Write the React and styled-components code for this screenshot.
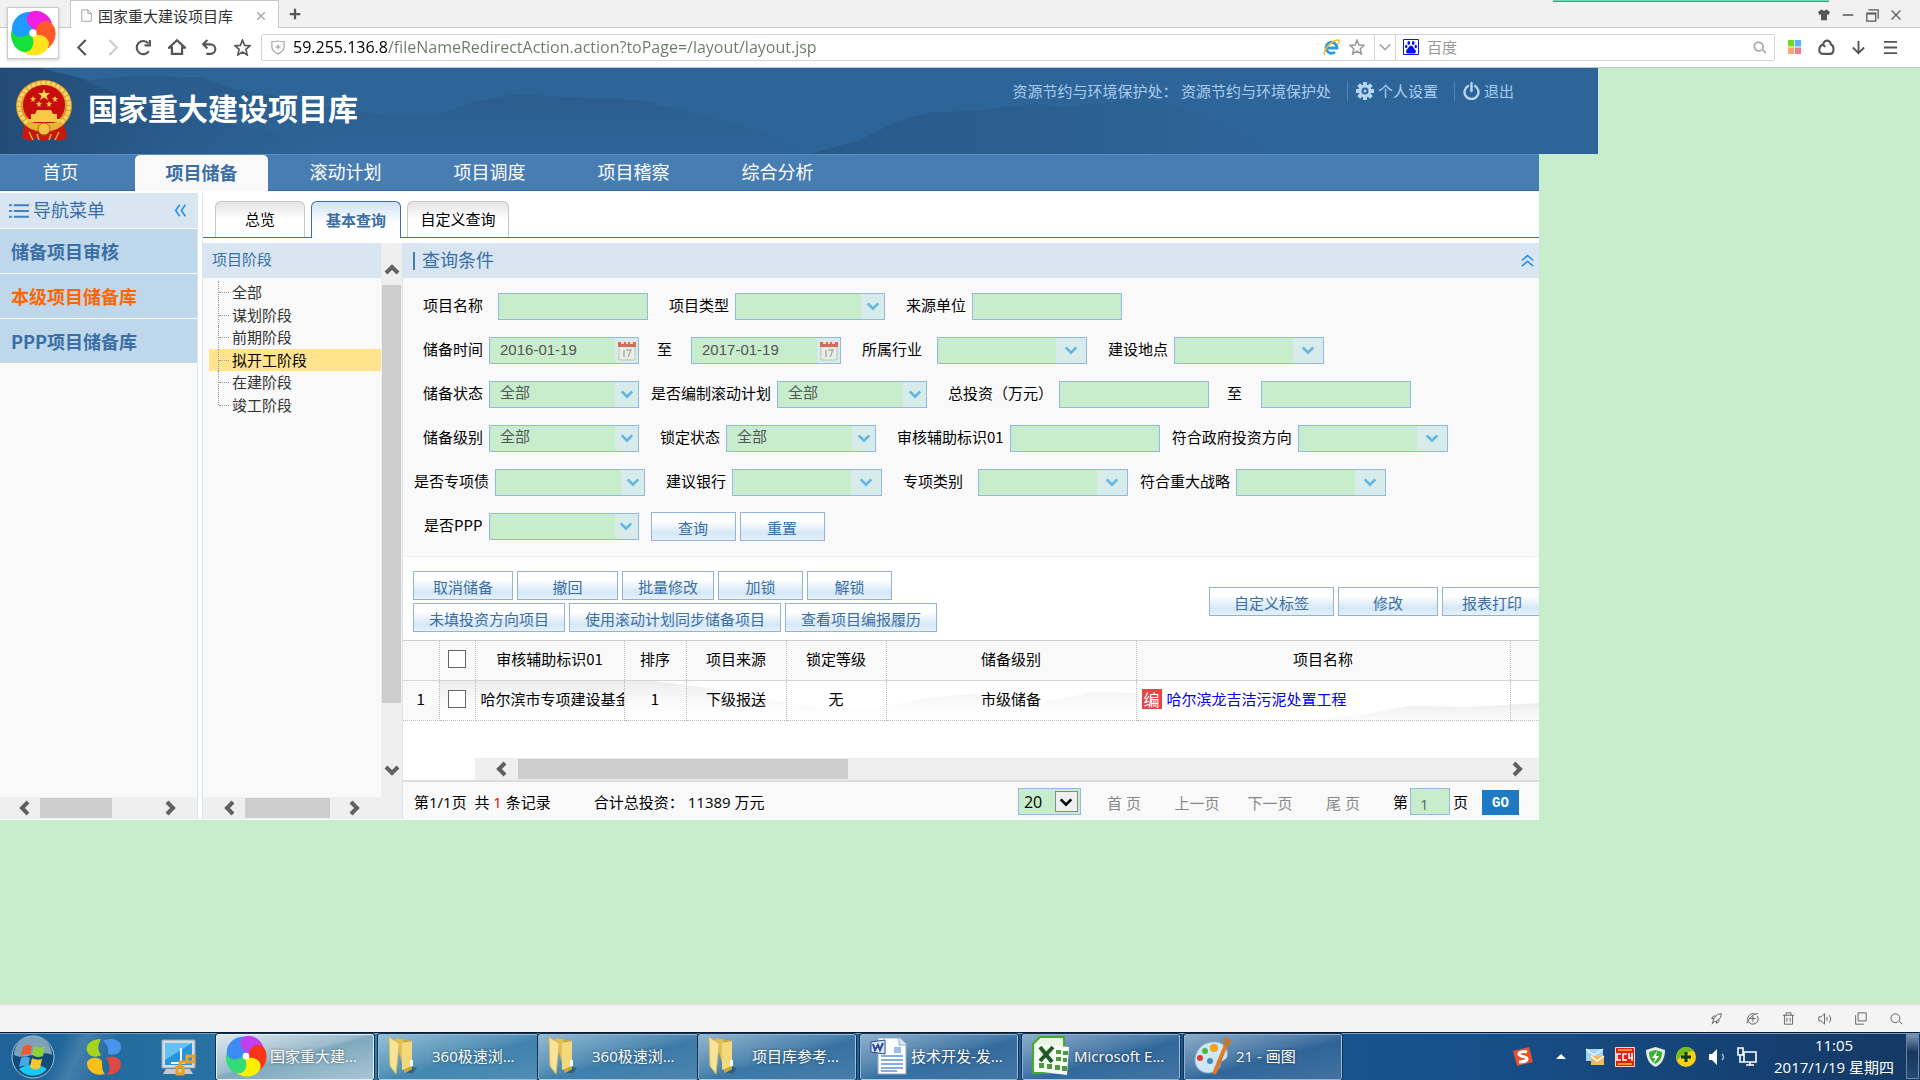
import React from "react";
import styled, { createGlobalStyle, css } from "styled-components";

const cjk = '"Noto Sans CJK SC", "Noto Sans", sans-serif';
const ui = '"Open Sans", "Noto Sans CJK SC", sans-serif';
const green = "#c7edcc";
const blue = "#3a6ea5";

const Global = createGlobalStyle`
  *, *::before, *::after { box-sizing: border-box; }
  body { margin: 0; font: 15px/20px ${cjk}; color: #000; background: ${green}; }
  button, input, select { font: inherit; color: inherit; margin: 0; padding: 0; border: 0; background: none; border-radius: 0; }
  button { cursor: pointer; }
  a { color: inherit; text-decoration: none; }
  ul { list-style: none; margin: 0; padding: 0; }
  svg { display: block; flex: none; }
  h1, h2 { margin: 0; font: inherit; }
`;

const Screen = styled.div`
  display: flex;
  flex-direction: column;
  min-height: 100vh;
  overflow: hidden;
`;

/* ---------- browser chrome ---------- */
const Chrome = styled.header`
  position: relative;
  background: #fff;
  border-bottom: 1px solid #c8c8c8;
`;
const TabStrip = styled.div`
  display: flex;
  height: 28px;
  padding-left: 70px;
  background: #f1f1f1;
  border-bottom: 1px solid #c8c8c8;
`;
const BrowserTab = styled.div`
  display: flex;
  align-items: center;
  width: 209px;
  height: 28px;
  padding: 2px 12px 0 9px;
  background: #fff;
  border: 1px solid #c8c8c8;
  border-bottom: 0;
  color: #333;
`;
const TabName = styled.span`
  flex: 1;
  margin-left: 4px;
  white-space: nowrap;
`;
const PlainButton = styled.button`
  display: flex;
  align-items: center;
  justify-content: center;
  width: ${(p) => p.$w || 32}px;
  height: ${(p) => p.$h || 28}px;
  color: ${(p) => p.$color || "#555"};
`;
const WindowControls = styled.div`
  display: flex;
  margin: 1px 12px 0 auto;
`;
const Strip = styled.div`
  position: absolute;
  top: 0;
  right: 91px;
  width: 276px;
  height: 2px;
  background: #6fd9b5;
  border-bottom: 1px solid #3e9c84;
`;
const BrowserLogo = styled.div`
  position: absolute;
  top: 7px;
  left: 7px;
  display: grid;
  place-items: center;
  width: 52px;
  height: 52px;
  background: #fff;
  border: 1px solid #ccc;
  box-shadow: 0 1px 3px rgba(0, 0, 0, 0.2);
`;
const ToolBar = styled.div`
  display: flex;
  align-items: center;
  height: 39px;
  padding: 0 14px 1px 67px;
`;
const AddressBox = styled.div`
  display: flex;
  flex: 1;
  align-items: center;
  height: 27px;
  margin: 0 3px 0 2px;
  border: 1px solid #d4d4d4;
  border-radius: 2px;
`;
const UrlInput = styled.input`
  flex: 1;
  min-width: 0;
  height: 25px;
  font-family: ${ui};
  font-size: 16px;
  background: linear-gradient(90deg, #000 95px, #6b7a68 95px);
  -webkit-background-clip: text;
  background-clip: text;
  -webkit-text-fill-color: transparent;
`;
const SearchBox = styled.div`
  display: flex;
  align-items: center;
  width: 379px;
  height: 25px;
  padding: 0 0 0 7px;
  border-left: 1px solid #d4d4d4;
`;
const SearchInput = styled.input`
  flex: 1;
  min-width: 0;
  margin-left: 8px;
  &::placeholder { color: #999; opacity: 1; }
`;
const Divided = styled.div`
  margin-left: 5px;
  border-left: 1px solid #d4d4d4;
`;

/* ---------- site header ---------- */
const Viewport = styled.main`
  flex: 1;
  background: ${green};
`;
const Banner = styled.div`
  position: relative;
  display: flex;
  width: calc(100% - 322px);
  height: 86px;
  padding: 0 84px 0 15px;
  background: #2e6599;
  color: #fff;
`;
const BannerArt = styled.svg`
  position: absolute;
  inset: 0;
  width: 100%;
  height: 100%;
`;
const Brand = styled.h1`
  position: relative;
  display: flex;
  align-items: center;
  gap: 15px;
  font: bold 30px/40px ${cjk};
`;
const BrandName = styled.span`
  padding-bottom: 8px;
`;
const Account = styled.div`
  position: relative;
  display: flex;
  align-items: center;
  height: 30px;
  margin: 8px 0 0 auto;
  color: #a9cdf0;
  white-space: pre;
`;
const AccountLink = styled.a`
  display: flex;
  align-items: center;
  gap: 4px;
  height: 20px;
  margin-left: 16px;
  padding-left: 8px;
  border-left: 1px solid #4f84b8;
`;
const MainNav = styled.nav`
  display: flex;
  width: calc(100% - 381px);
  height: 37px;
  background: #477db2;
  border-top: 1px solid #5a8fc4;
  border-bottom: 1px solid #2f6ba6;
`;
const NavLink = styled.a`
  width: ${(p) => (p.$first ? 121 : 133)}px;
  margin-right: ${(p) => (p.$first ? 14 : 11)}px;
  height: 36px;
  color: #fff;
  font-size: 18px;
  line-height: 32px;
  text-align: center;
  ${(p) => p.$active && css`
    background: #f9f9f9;
    color: ${blue};
    font-weight: bold;
    border-radius: 5px 5px 0 0;
    line-height: 34px;
  `}
`;

/* ---------- work area ---------- */
const Work = styled.div`
  display: flex;
  width: calc(100% - 381px);
  padding: 2px 0 1px;
  background: #fff;
`;
const SideMenu = styled.aside`
  display: flex;
  flex-direction: column;
  width: 198px;
  margin-right: 4px;
  background: #f9f9f9;
  border-right: 1px solid #d9e6f2;
`;
const SideHead = styled.div`
  display: flex;
  align-items: center;
  height: 36px;
  padding: 0 10px 0 9px;
  background: #d9e6f2;
  border-bottom: 1px solid #fff;
  color: ${blue};
  font-size: 18px;
`;
const SideTitle = styled.h2`
  flex: 1;
  margin-left: 4px;
  padding-bottom: 4px;
`;
const SideItem = styled.a`
  display: block;
  height: 45px;
  padding-left: 11px;
  background: #bfd7ea;
  border-bottom: 1px solid #fff;
  color: ${(p) => (p.$active ? "#ff6600" : blue)};
  font-weight: bold;
  font-size: 18px;
  line-height: 44px;
`;
const Content = styled.section`
  display: flex;
  flex: 1;
  flex-direction: column;
  min-width: 0;
  border-left: 1px solid #d9e6f2;
`;
const SubTabs = styled.div`
  display: flex;
  align-items: flex-end;
  gap: 6px;
  height: 45px;
  margin-bottom: 5px;
  padding-left: 12px;
  border-bottom: 1px solid ${blue};
`;
const SubTab = styled.button`
  width: ${(p) => p.$w || 90}px;
  height: 36px;
  padding-bottom: 1px;
  background: linear-gradient(#e4e4e4, #fff 50%);
  border: 1px solid #c6c6c6;
  border-bottom: 0;
  border-radius: 6px 6px 0 0;
  ${(p) => p.$active && css`
    height: 37px;
    margin-bottom: -1px;
    background: linear-gradient(#d0e2f4, #fff 60%);
    border-color: ${blue};
    color: ${blue};
    font-weight: bold;
  `}
`;
const Panels = styled.div`
  display: flex;
  flex: 1;
`;
const TreePanel = styled.div`
  display: flex;
  width: 200px;
  border-right: 1px solid #d9e6f2;
  background: #efefef;
`;
const TreeMain = styled.div`
  display: flex;
  flex: 1;
  flex-direction: column;
  background: #f9f9f9;
`;
const TreeTitle = styled.h2`
  height: 35px;
  padding-left: 9px;
  background: #d9e6f2;
  color: ${blue};
  line-height: 31px;
`;
const Tree = styled.ul`
  padding: 3px 0 0 6px;
`;
const TreeNode = styled.li`
  display: flex;
  align-items: center;
  position: relative;
  height: 22px;
  margin-bottom: ${(p) => (p.$odd ? 1 : 0)}px;
  padding-left: 10px;
  background: ${(p) => (p.$active ? "#ffe48d" : "none")};
  color: ${(p) => (p.$active ? "#000" : "#333")};
  line-height: 18px;
  &::before {
    content: "";
    width: 10px;
    margin-right: 3px;
    border-top: 1px dotted #999;
  }
  &::after {
    content: "";
    position: absolute;
    left: 9px;
    top: 0;
    height: ${(p) => (p.$last ? "50%" : "100%")};
    border-left: 1px dotted #999;
  }
`;
const HScroll = styled.div`
  display: flex;
  align-items: center;
  height: 22px;
  margin-top: auto;
  padding: 0 ${(p) => p.$pad[1]}px 0 ${(p) => p.$pad[0]}px;
  margin-left: ${(p) => p.$indent || 0}px;
  background: #efefef;
`;
const HThumb = styled.div`
  width: ${(p) => p.$w}px;
  height: 20px;
  margin: 0 auto 0 ${(p) => p.$lead}px;
  background: #cdcdcd;
`;
const VScroll = styled.div`
  display: flex;
  flex-direction: column;
  align-items: center;
  width: 21px;
  padding: 19px 0 41px;
  background: #efefef;
`;
const VThumb = styled.div`
  width: 19px;
  height: 418px;
  margin: 7px 0 auto;
  background: #cdcdcd;
`;
const Main = styled.div`
  display: flex;
  flex: 1;
  flex-direction: column;
  min-width: 0;
  overflow: hidden;
`;
const MainTitle = styled.div`
  display: flex;
  align-items: center;
  height: 35px;
  padding: 0 5px 0 10px;
  background: #d9e6f2;
  color: ${blue};
`;
const TitleText = styled.h2`
  flex: 1;
  height: 18px;
  padding-left: 7px;
  border-left: 2px solid #477db2;
  font-size: 18px;
  line-height: 14px;
`;

/* ---------- query form ---------- */
const Query = styled.form`
  padding: 6px 0 8px;
  background: #f9f9f9;
  border-bottom: 1px solid #eee;
`;
const Row = styled.div`
  display: flex;
  align-items: center;
  height: 44px;
  padding-left: ${(p) => p.$pad}px;
`;
const Field = styled.label`
  display: flex;
  align-items: center;
  gap: ${(p) => p.$gap}px;
  margin-left: ${(p) => p.$lead}px;
  white-space: nowrap;
`;
const FieldName = styled.span`
  padding-bottom: 3px;
`;
const Box = styled.span`
  position: relative;
  display: flex;
  width: 150px;
  height: 27px;
  background: ${green};
  border: 1px solid #94b8e4;
`;
const BoxInput = styled.input`
  flex: 1;
  min-width: 0;
  padding-left: 10px;
  color: #555;
  font-family: "Liberation Sans", ${cjk};
`;
const BoxSelect = styled.select`
  width: 100%;
  padding: 0 0 4px 10px;
  appearance: none;
  color: #555;
`;
const BoxEnd = styled.span`
  display: grid;
  place-items: center;
  width: ${(p) => (p.$wide ? 30 : 23)}px;
  background: #d7ecea;
  color: #62b6e0;
  pointer-events: none;
  ${(p) => p.$over && css`
    position: absolute;
    top: 0;
    right: 0;
    bottom: 0;
  `}
`;
const Button = styled.button`
  flex: none;
  width: ${(p) => p.$w}px;
  height: 29px;
  padding-top: 3px;
  background: linear-gradient(#fff 30%, #d5e7f6 75%, #e6f1fa);
  border: 1px solid #90b4d8;
  color: ${blue};
  line-height: 22px;
  white-space: nowrap;
`;
const Tools = styled.div`
  display: flex;
  align-items: center;
  justify-content: space-between;
  height: 83px;
  padding: 12px 0 6px 10px;
`;
const ToolLines = styled.div`
  display: flex;
  flex-direction: column;
  gap: 3px;
`;
const ToolLine = styled.div`
  display: flex;
  gap: 4px;
`;
const ToolRight = styled(ToolLine)`
  margin-right: -3px;
`;
const QueryButtons = styled(ToolLine)`
  margin-left: 12px;
`;

/* ---------- result grid ---------- */
const GridArea = styled.div`
  position: relative;
  height: 118px;
  border-top: 1px solid #ccc;
`;
const GridArt = styled.svg`
  position: absolute;
  top: 40px;
  left: 36px;
  width: calc(100% - 36px);
  height: 60px;
`;
const Grid = styled.table`
  position: relative;
  width: 100%;
  table-layout: fixed;
  border-collapse: collapse;
  th, td {
    height: 40px;
    padding: 0 0 2px;
    border-right: 1px dotted #bbb;
    border-bottom: 1px dotted #bbb;
    font-weight: normal;
    text-align: center;
    white-space: nowrap;
    overflow: hidden;
  }
  th { background: #f9f9f9; }
  thead th { height: 39px; border-bottom: 1px solid #d6d6d6; }
  th:last-child, td:last-child { border-right: 0; }
`;
const Cut = styled.td`
  && { padding-left: 5px; text-align: left; text-overflow: clip; }
`;
const Check = styled.input`
  display: block;
  width: 18px;
  height: 18px;
  margin: 0 auto;
  appearance: none;
  background: #fff;
  border: 1px solid #666;
`;
const Project = styled.a`
  display: flex;
  align-items: center;
  gap: 5px;
  padding-left: 5px;
  color: #0000ee;
`;
const Badge = styled.span`
  width: 20px;
  height: 20px;
  background: #e64545;
  color: #fff;
  font-size: 16px;
  line-height: 20px;
  text-align: center;
`;
const Pager = styled.div`
  display: flex;
  align-items: center;
  height: 39px;
  padding: 2px 20px 0 11px;
  background: #f9f9f9;
  border-top: 2px solid #dcdcdc;
  font-family: ${ui};
  white-space: pre;
`;
const Count = styled.span`
  color: red;
`;
const Total = styled.span`
  flex: 1;
  margin-left: 43px;
`;
const PageSize = styled.span`
  position: relative;
  display: flex;
  width: 63px;
  height: 27px;
  margin-right: 20px;
  background: ${green};
  border: 1px solid #94b8e4;
`;
const PageSizeSelect = styled.select`
  width: 100%;
  padding-left: 5px;
  appearance: none;
  font-size: 16px;
`;
const PageSizeArrow = styled.span`
  position: absolute;
  top: 2px;
  right: 2px;
  display: grid;
  place-items: center;
  width: 23px;
  height: 21px;
  background: #efefef;
  border: 1px solid #888;
  pointer-events: none;
`;
const PageLink = styled.button`
  width: 46px;
  margin-right: 27px;
  padding-top: 3px;
  color: #888;
  white-space: nowrap;
`;
const PageNumber = styled.input`
  width: 40px;
  height: 27px;
  margin: 0 3px 0 2px;
  padding: 4px 0 0 9px;
  background: ${green};
  border: 1px solid #94b8e4;
  color: #666;
`;
const Go = styled.button`
  width: 37px;
  height: 25px;
  margin: 2px 0 0 14px;
  background: #1f7ac4;
  color: #fff;
  font: bold 14px/20px "Liberation Mono", monospace;
`;

/* ---------- browser status bar and task bar ---------- */
const StatusBar = styled.footer`
  display: flex;
  align-items: center;
  justify-content: flex-end;
  height: 28px;
  padding-right: 6px;
  background: #f4f4f4;
  border-top: 1px solid #e0e0e0;
`;
const TaskBar = styled.footer`
  display: flex;
  align-items: center;
  height: 48px;
  padding-right: 1px;
  background: linear-gradient(115deg, transparent 60px, rgba(255,255,255,.15) 80px, transparent 110px),
    linear-gradient(90deg, #1f6398, #2f7daa 20%, #1d5c94 50%, #17518c 75%, #143864);
  border-top: 1px solid #0d1c30;
  box-shadow: inset 0 1px #6f9fc4;
  color: #fff;
`;
const Launcher = styled.button`
  display: grid;
  place-items: center;
  width: ${(p) => p.$w}px;
  height: 47px;
`;
const TaskButton = styled.button`
  display: flex;
  align-items: center;
  width: ${(p) => (p.$stacked ? 160 : 158)}px;
  height: 46px;
  margin-right: ${(p) => (p.$stacked ? 0 : 4)}px;
  padding-left: 8px;
  padding-bottom: 2px;
  gap: ${(p) => (p.$folder ? 5 : 3)}px;
  background: ${(p) => p.$active
    ? "linear-gradient(165deg, #dfe9ee, #9dbccd 45%, #7fa9bf 50%, #a9c6d6)"
    : "linear-gradient(165deg, rgba(255,255,255,.5), rgba(255,255,255,.2) 45%, rgba(255,255,255,.1) 55%, rgba(255,255,255,.18))"};
  border: 1px solid ${(p) => (p.$active ? "#e8f0f4" : "rgba(200,225,240,.6)")};
  border-radius: 2px;
  outline: 1px solid #12304f;
  font-family: ${ui};
  text-shadow: 0 0 3px rgba(0, 0, 0, 0.5);
  white-space: nowrap;
`;
const Tray = styled.div`
  display: flex;
  align-items: center;
  margin-left: auto;
`;
const Clock = styled.div`
  width: 144px;
  padding-bottom: 1px;
  font: 15px/22px ${ui};
  text-align: center;
  white-space: nowrap;
`;
const ShowDesktop = styled.button`
  width: 13px;
  height: 45px;
  background: linear-gradient(#7d97b3, #18365c 40%, #234a74);
  border: 1px solid #6c88a6;
`;

/* ---------- drawings ---------- */
const Line = ({ d, w = 16, h = w, box = "0 0 16 16", sw = 2, fill = "none", ...rest }) => (
  <svg width={w} height={h} viewBox={box} fill={fill} stroke="currentColor" strokeWidth={sw} {...rest}>
    <path d={d} />
  </svg>
);
const Chevron = ({ dir = "down", w = 14, sw = 3 }) => {
  const turn = { down: 0, left: 90, up: 180, right: 270 }[dir];
  return (
    <svg width={w} height={w} viewBox="0 0 16 16" fill="none" stroke="currentColor" strokeWidth={sw}>
      <path d="M2 5l6 6 6-6" transform={`rotate(${turn} 8 8)`} />
    </svg>
  );
};
const ScrollArrow = styled.button`
  display: grid;
  place-items: center;
  width: 16px;
  height: 16px;
  color: #606060;
`;
const petal = "M0 -3C-8 -5 -12 -12 -8 -17C-3 -23 9 -22 15 -13C9 -15 4 -11 3 -3Z";
const Pinwheel = ({ size = 46, colors = ["#f01ee0", "#ff5a28", "#ffe41e", "#14e03c", "#1e9bff"] }) => (
  <svg width={size} height={size} viewBox="-22 -22 44 44">
    {colors.map((c, i) => (
      <path key={c} fill={c} d={petal} transform={`rotate(${12 + i * 72})`} stroke={c} strokeWidth="1.500" strokeLinejoin="round" />
    ))}
    <circle r="3.500" fill="#fff" />
  </svg>
);
const starPath = "M8 1l2 5 5 .4-3.8 3.3L12.400 15 8 12.200 3.600 15l1.200-5.300L1 6.400 6 6z";
const Emblem = () => (
  <svg width="58" height="64" viewBox="0 0 58 62">
    <path d="M9 44l-2 14 8 3 6-3 8 3 8-3 7 3 8-3-3-14z" fill="#c8190f" />
    <ellipse cx="29" cy="26" rx="28" ry="26" fill="#d99a24" />
    <ellipse cx="29" cy="26" rx="25" ry="23" fill="none" stroke="#f7d468" strokeWidth="4" strokeDasharray="4 1" />
    <ellipse cx="29" cy="25" rx="21" ry="20" fill="#c80d0d" />
    <path d="M29 9l1.500 4h4.500l-3.500 3 1.500 4-4-2.500-4 2.500 1.500-4-3.500-3h4.500z" fill="#ffd94a" />
    <g fill="#f7c945">
      <path d="M18 16l1 2h2l-2 2 1 2-2-1-2 1 1-2-2-2h2zM40 16l1 2h2l-2 2 1 2-2-1-2 1 1-2-2-2h2zM24 21l1 2h2l-2 2 1 2-2-1-2 1 1-2-2-2h2zM34 21l1 2h2l-2 2 1 2-2-1-2 1 1-2-2-2h2z" />
      <path d="M22 30h14l2 4h4v5h4v3H12v-3h4v-5h4z" />
      <path d="M11 43h36l-5 6H16z" fill="#e9b238" />
    </g>
    <circle cx="29" cy="49" r="6" fill="#f2c14a" stroke="#b5650f" />
    <path d="M14 52l4 8M44 52l-4 8M22 54l2 6M36 54l-2 6" stroke="#f0a830" strokeWidth="1.500" />
  </svg>
);
const Gear = () => (
  <svg width="18" height="18" viewBox="-9 -9 18 18" fill="#b8d6f2">
    {[0, 45, 90, 135].map((a) => <rect key={a} x="-2" y="-9" width="4" height="18" transform={`rotate(${a})`} />)}
    <circle r="6.500" />
    <circle r="3.500" fill="#2e6599" />
    <circle r="1.500" />
  </svg>
);
const Power = () => (
  <svg width="17" height="18" viewBox="0 0 17 18" fill="none" stroke="#b8d6f2" strokeWidth="2.400" strokeLinecap="round">
    <path d="M5 4a7 7 0 1 0 7 0M8.500 1v8" />
  </svg>
);
const Calendar = () => (
  <svg width="18" height="21" viewBox="0 0 18 21">
    <path d="M1 3h16v17H1z" fill="#e9efe6" stroke="#b9c4b9" />
    <path d="M0 2h18v5H0z" fill="#d9695f" />
    <path d="M3 0h3v4H3zM8 0h2v4H8zM12 0h3v4h-3z" fill="#e8e0dc" />
    <path d="M6 10v7M8 10h5l-3 7" stroke="#a9b0a9" strokeWidth="1.500" fill="none" />
  </svg>
);
const Ie = () => (
  <svg width="17" height="17" viewBox="0 0 17 17" fill="none">
    <path d="M4 9h10a5.500 5.500 0 1 0-2 4" stroke="#2e9be0" strokeWidth="2.800" />
    <path d="M2 16C-1 12 9 1 15 1c2 0 1 3 0 4" stroke="#f2bd22" strokeWidth="1.600" />
  </svg>
);
const Paw = () => (
  <svg width="16" height="16" viewBox="0 0 16 16" fill="#0a14f0">
    <path d="M.5.5h15v15H.5z" fill="#fff" stroke="#0a14f0" />
    <ellipse cx="5.800" cy="4" rx="1.400" ry="2" /><ellipse cx="10.200" cy="4" rx="1.400" ry="2" />
    <ellipse cx="3.200" cy="7.500" rx="1.200" ry="1.700" /><ellipse cx="12.800" cy="7.500" rx="1.200" ry="1.700" />
    <path d="M8 6.500c2 0 2.500 2.500 4 4s1 4-1 4H5c-2 0-2.500-2.500-1-4s2-4 4-4z" />
  </svg>
);
const Folder = () => (
  <svg width="40" height="40" viewBox="0 0 40 40">
    <path d="M22 30l8 2-4 5h-8z" fill="#12405f" opacity=".5" />
    <path d="M8 2l17 3v28l-7 4z" fill="#e2bf55" />
    <path d="M16 4l9 1v28l-7 3z" fill="#c9a23c" />
    <path d="M2 1l8 5c2 1 2 2 2 4l-3 28L3 30z" fill="#f7e49a" stroke="#d8b955" />
    <path d="M15 7l10-2v25l-10 4z" fill="#f3d97c" />
    <path d="M23 24h3v6h-3z" fill="#fff" />
  </svg>
);
const Word = () => (
  <svg width="39" height="40" viewBox="0 0 39 40">
    <path d="M9 2h22l6 6v30H9z" fill="#fbfdff" stroke="#8fa9cc" />
    <path d="M30 1v8h8" fill="#d9e5f4" stroke="#8fa9cc" />
    <path d="M12 20h22M12 24h22M12 28h22M12 32h22M12 35h16" stroke="#5f93d4" strokeWidth="1.500" />
    <path d="M2 6l14-2v14L2 16z" fill="#dfe8f6" stroke="#27489c" />
    <path d="M4 8l2 6 3-5 2 5 3-7" stroke="#27489c" strokeWidth="2" fill="none" />
    <path d="M25 11h7v6h-7z" fill="#9dbde6" />
  </svg>
);
const Excel = () => (
  <svg width="40" height="40" viewBox="0 0 40 40">
    <path d="M2 37V8l7-7h24v36z" fill="#e9f5e2" stroke="#4aa827" strokeWidth="2" />
    <path d="M5 8l33 3-2 28-32-4z" fill="#f8fcf6" />
    <path d="M25 14h5v4h-5zM32 15h5v4h-5zM25 21h5v4h-5zM32 22h4v4h-4zM8 27h5v5H8zM16 28h5v5h-5zM24 29h5v5h-5zM31 30h5v5h-5z" fill="#4c9a3d" />
    <path d="M9 11l12 15M22 11L9 25" stroke="#1c5c22" strokeWidth="4" />
  </svg>
);
const Paint = () => (
  <svg width="40" height="40" viewBox="0 0 40 40">
    <path d="M19 6c10-1 17 5 15 15-2 4-7 3-7 8 0 6-10 10-17 7C2 33 0 24 4 16 7 10 12 7 19 6z" fill="#cfe6f5" stroke="#88b5d4" />
    <circle cx="7" cy="22" r="3" fill="#e23f34" /><circle cx="12" cy="15" r="3" fill="#4cb83c" /><circle cx="21" cy="12" r="4" fill="#f5a11c" />
    <circle cx="17" cy="25" r="3" fill="#4389c4" />
    <path d="M21 38L33 9" stroke="#e07824" strokeWidth="4" />
    <path d="M30 8l1-7 8 3-4 7z" fill="#b77b42" />
  </svg>
);
const Orb = () => (
  <svg width="44" height="44" viewBox="0 0 44 44">
    <circle cx="22" cy="22" r="21" fill="#124a78" stroke="#9fc6e0" />
    <path d="M3 20A19 19 0 0 1 41 20C30 14 14 26 3 20z" fill="#9bb7c9" opacity=".8" />
    <path d="M8 34a18 18 0 0 0 28 0c-8-6-20-6-28 0z" fill="#19c8f0" />
    <path d="M12 12c4-3 7-2 9-1l-2 9c-3-2-6-1-9 1z" fill="#f0592c" />
    <path d="M23 11c4 2 8 2 11 0l-2 10c-4 2-7 1-11-1z" fill="#8fce3c" />
    <path d="M10 23c3-2 6-2 9 0l-2 9c-4-2-6-1-9 0z" fill="#4aa8ea" />
    <path d="M21 23c3 2 7 2 10 1l-2 9c-4 2-7 2-10-1z" fill="#fbc72c" />
  </svg>
);
const Petals = () => (
  <svg width="38" height="38" viewBox="0 0 38 38">
    <path d="M16 1C6 1 0 7 2 13c2 6 9 7 14 4-4-5-3-11 0-16z" fill="#a8d41c" />
    <path d="M18 3c7-4 18-2 18 6 0 7-7 9-13 7 1-6-1-10-5-13z" fill="#4a94ee" />
    <path d="M2 24c3-5 11-6 15-1 0 5 0 10 3 13C11 39 1 33 2 24z" fill="#f7bf18" />
    <path d="M21 20c6-3 15-1 15 6 0 7-6 11-14 11 4-6 3-12-1-17z" fill="#de4a42" />
  </svg>
);
const Snip = () => (
  <svg width="36" height="38" viewBox="0 0 36 38">
    <path d="M1 2h33v28H1z" fill="#d5dde2" stroke="#98a5ad" />
    <path d="M4 5h27v22H4z" fill="#2794dc" />
    <path d="M4 5h27L4 22z" fill="#64c2f2" />
    <path d="M5 31h24l3 5H2z" fill="#c4ccd1" />
    <path d="M20 10v15M10 25h14" stroke="#fff" strokeWidth="2" />
    <path d="M26 18h7v6h-7zM16 29h6v7h-6zM19 28v-4h7" stroke="#eba024" strokeWidth="3" fill="none" />
  </svg>
);

const statusIcons = [
  ["加速", "M3 13l2-5 4-5 5-1-1 5-5 4zM5 8H2l2-3h3M8 11v3l3-2V9M2 15l3-3"],
  ["兼容模式", "M14 5a6.500 6.500 0 1 1-2-2M1 14C4 6 10 2 15 2M5 8h7M8.500 5v7"],
  ["清理", "M1 4h14M3 4v11h10V4M5 4V1h6v3M6 7v5M10 7v5"],
  ["静音", "M1 6v5h3l4 4V2L4 6zM11 6v5M14 4c2 3 2 6 0 9"],
  ["多窗口", "M5 1h10v10H5zM2 4v11h10"],
  ["缩放", "M11 11a5.500 5.500 0 1 0-1 1M11 11l4 4"],
];
const trayIcons = [
  ["搜狗输入法", 38, <svg width="20" height="20" viewBox="0 0 20 20"><path d="M0 4l16-4 4 15-16 4z" fill="#e8502c" /><path d="M14 5c-4-1-8 0-8 2 0 3 8 2 8 5 0 2-4 3-8 3" fill="none" stroke="#fff" strokeWidth="3" /></svg>],
  ["显示隐藏的图标", 38, <svg width="10" height="5" viewBox="0 0 10 5"><path d="M0 5l5-5 5 5z" fill="#fff" /></svg>],
  ["邮件", 30, <svg width="18" height="18" viewBox="0 0 18 18"><path d="M0 1h17v12H0z" fill="#a5d1f2" /><path d="M0 1l8 6 9-6" fill="none" stroke="#e8f4fc" strokeWidth="1.500" /><path d="M5 8h13v9H5z" fill="#f0b95c" /><path d="M5 8l6 5 7-5" fill="none" stroke="#fff" strokeWidth="1.500" /></svg>],
  ["网银", 30, <svg width="20" height="20" viewBox="0 0 20 20"><path d="M.5.500h19v19H.5z" fill="#e3200f" stroke="#ffd7c0" /><path d="M6 7H2v6h4M12 7H8v6h4M14 6v5h4M17 6v8" stroke="#fff" strokeWidth="1.500" fill="none" /><path d="M3 3h14M3 17h14" stroke="#ff9b24" strokeWidth="2" /></svg>],
  ["安全防护", 30, <svg width="19" height="20" viewBox="0 0 19 20"><path d="M9.500 0L19 3c0 8-3 14-9.500 17C3 17 0 11 0 3z" fill="#e4ece4" /><path d="M9.500 3L16 5c0 6-2 9-6.500 12C5 14 3 11 3 5z" fill="#3cae34" /><path d="M11 4l-5 7h3l-1 5 5-7h-3z" fill="#fff" /></svg>],
  ["安全卫士", 31, <svg width="20" height="20" viewBox="0 0 20 20"><circle cx="10" cy="10" r="10" fill="#f5cf18" /><path d="M10 0a10 10 0 0 1 8 4c-6 0-12 4-17 9A10 10 0 0 1 10 0z" fill="#74bc1c" /><path d="M10 5v10M5 10h10" stroke="#063c14" strokeWidth="3" /></svg>],
  ["音量", 31, <svg width="18" height="18" viewBox="0 0 18 18"><path d="M1 6v6h3l5 5V1L4 6z" fill="#fff" /><path d="M14 6c2 2 2 4 0 6" stroke="#9db8d4" fill="none" strokeWidth="1.500" /></svg>],
  ["网络", 30, <svg width="20" height="20" viewBox="0 0 20 20" fill="none" stroke="#fff" strokeWidth="1.600"><path d="M7 5h12v10H7zM9 18h8M13 15v3M1 1h5v7H1zM3 8v7h4" /></svg>],
];

/* ---------- data ---------- */
const rows = [
  [20, ["项目名称", "text", 0, 15], ["项目类型", "select", 21, 6], ["来源单位", "text", 21, 6]],
  [20, ["储备时间", "date", 0, 6, "2016-01-19"], ["至", "date", 18, 19, "2017-01-19"], ["所属行业", "wide", 21, 15], ["建设地点", "wide", 21, 6]],
  [20, ["储备状态", "select", 0, 6, "全部"], ["是否编制滚动计划", "select", 12, 6, "全部"], ["总投资（万元）", "text", 21, 6], ["至", "text", 18, 19]],
  [20, ["储备级别", "select", 0, 6, "全部"], ["锁定状态", "select", 21, 6, "全部"], ["审核辅助标识01", "text", 21, 6], ["符合政府投资方向", "wide", 12, 6]],
  [11, ["是否专项债", "select", 0, 6], ["建议银行", "wide", 21, 6], ["专项类别", "wide", 21, 15], ["符合重大战略", "wide", 12, 6]],
  [21, ["是否PPP", "select", 0, 6]],
];
const leftTools = [
  [["取消储备", 100], ["撤回", 101], ["批量修改", 92], ["加锁", 85], ["解锁", 85]],
  [["未填投资方向项目", 152], ["使用滚动计划同步储备项目", 212], ["查看项目编报履历", 152]],
];
const rightTools = [["自定义标签", 125], ["修改", 100], ["报表打印", 100]];
const columns = [36, 36, 149, 62, 100, 100, 250, 374, undefined];

function Control({ kind, value = "" }) {
  if (kind === "text") return <Box><BoxInput type="text" defaultValue={value} /></Box>;
  if (kind === "date")
    return (
      <Box>
        <BoxInput type="text" defaultValue={value} />
        <BoxEnd><Calendar /></BoxEnd>
      </Box>
    );
  return (
    <Box>
      <BoxSelect defaultValue={value}><option value={value}>{value}</option></BoxSelect>
      <BoxEnd $over $wide={kind === "wide"}><Chevron sw={3} /></BoxEnd>
    </Box>
  );
}

function Scroller({ pad, lead, thumb, indent }) {
  return (
    <HScroll $pad={pad} $indent={indent}>
      <ScrollArrow aria-label="向左滚动"><Chevron dir="left" w={16} sw={4} /></ScrollArrow>
      <HThumb $lead={lead} $w={thumb} />
      <ScrollArrow aria-label="向右滚动"><Chevron dir="right" w={16} sw={4} /></ScrollArrow>
    </HScroll>
  );
}

function Browser() {
  return (
    <Chrome>
      <TabStrip>
        <BrowserTab>
          <Line d="M1 1h7l4 4v9H1zM8 1v4h4" w={14} sw={1} box="0 0 14 16" color="#999" />
          <TabName>国家重大建设项目库</TabName>
          <PlainButton $w={10} $h={16} aria-label="关闭标签" $color="#aaa"><Line d="M3 3l10 10M13 3L3 13" w={12} /></PlainButton>
        </BrowserTab>
        <PlainButton aria-label="新标签"><Line d="M8 1v14M1 8h14" w={12} sw={3} /></PlainButton>
        <WindowControls>
          <PlainButton $w={24} aria-label="皮肤"><Line d="M4 1h2l2 2 2-2h2l4 3-2 4-2-1v8H4V7L2 8 0 4z" w={12} sw={0} style={{ fill: "#555" }} /></PlainButton>
          <PlainButton $w={24} aria-label="最小化"><Line d="M1 8h14" w={12} /></PlainButton>
          <PlainButton $w={24} aria-label="还原"><Line d="M1 5h11v10H1zM3 1h12v11M1 6h11" w={13} sw={1.500} /></PlainButton>
          <PlainButton $w={24} aria-label="关闭"><Line d="M2 2l12 12M14 2L2 14" w={12} sw={1.500} /></PlainButton>
        </WindowControls>
      </TabStrip>
      <Strip />
      <ToolBar>
        <PlainButton $w={30} aria-label="后退"><Line d="M11 1L4 8l7 7" w={17} /></PlainButton>
        <PlainButton $w={30} $color="#ccc" aria-label="前进"><Line d="M5 1l7 7-7 7" w={17} /></PlainButton>
        <PlainButton $w={33} aria-label="刷新"><Line d="M13 11.500A6.200 6.200 0 1 1 12.500 4M14 1v5H9" w={17} /></PlainButton>
        <PlainButton $w={33} aria-label="主页"><Line d="M1 8.500L8 2l7 6.500H12.500V14h-9V8.500z" w={18} /></PlainButton>
        <PlainButton $w={33} aria-label="恢复"><Line d="M6 1L2 5l4 4M2 5h7a4.500 4.500 0 0 1 0 9H5" w={17} /></PlainButton>
        <PlainButton $w={33} aria-label="收藏"><Line d={starPath} w={17} sw={1.500} /></PlainButton>
        <AddressBox>
          <PlainButton $w={31} $color="#999" aria-label="网站信息"><Line d="M1 2c3 0 4 0 7-1 3 1 4 1 7 1v6c0 4-3 6-7 8-4-2-7-4-7-8zM8 5v6M5 8h6" w={14} h={16} sw={1.200} /></PlainButton>
          <UrlInput aria-label="地址" defaultValue="59.255.136.8/fileNameRedirectAction.action?toPage=/layout/layout.jsp" />
          <PlainButton $w={25} aria-label="兼容模式"><Ie /></PlainButton>
          <PlainButton $w={25} $color="#999" aria-label="加入收藏"><Line d={starPath} w={16} sw={1.500} /></PlainButton>
          <Divided><PlainButton $w={20} $h={25} $color="#aaa" aria-label="历史"><Chevron w={14} sw={2} /></PlainButton></Divided>
          <SearchBox>
            <Paw />
            <SearchInput aria-label="搜索" placeholder="百度" />
            <PlainButton $w={28} $color="#aaa" aria-label="搜索"><Line d="M10.500 10.500a5 5 0 1 0-1 1M10.500 10.500l4 4.500" w={14} /></PlainButton>
          </SearchBox>
        </AddressBox>
        <PlainButton aria-label="应用">
          <svg width="13" height="14" viewBox="0 0 13 14"><path d="M0 0h6v6.500H0z" fill="#6cdb1c" /><path d="M7 0h6v6.500H7z" fill="#55b4ff" /><path d="M0 7.500h6V14H0z" fill="#ffa36c" /><path d="M7 7.500h6V14H7z" fill="#f27d88" /></svg>
        </PlainButton>
        <PlainButton aria-label="云"><Line d="M5 5a3.500 3.500 0 0 1 7 0c4 2 3 9-.5 9h-7C0 14 0 7 5 5c0 1 1 2 2 2" w={17} /></PlainButton>
        <PlainButton aria-label="下载"><Line d="M8 1v13M2 8l6 6 6-6" w={15} /></PlainButton>
        <PlainButton aria-label="菜单"><Line d="M1 2h14M1 8h14M1 14h14" w={15} /></PlainButton>
      </ToolBar>
      <BrowserLogo><Pinwheel /></BrowserLogo>
    </Chrome>
  );
}

function Results() {
  return (
    <GridArea>
      <GridArt viewBox="0 0 1100 60" preserveAspectRatio="none">
        <defs>
          <linearGradient id="mist" x1="0" y1="0" x2="0" y2="1">
            <stop offset="0" stopColor="#ececec" /><stop offset="1" stopColor="#fff" stopOpacity="0" />
          </linearGradient>
        </defs>
        <path d="M0 0h215l40 5 50 8 60 12 70 4 50-12 50-4 60 10 60-12 40 1 60 12 100 20H0z" fill="url(#mist)" />
        <path d="M810 46l60-8 50-4 50-9 60 1 70-4v30z" fill="url(#mist)" />
      </GridArt>
      <Grid>
        <colgroup>{columns.map((w, i) => <col key={i} style={{ width: w }} />)}</colgroup>
        <thead>
          <tr>
            <th />
            <th><Check type="checkbox" aria-label="全选" /></th>
            {["审核辅助标识01", "排序", "项目来源", "锁定等级", "储备级别", "项目名称"].map((t) => <th key={t}>{t}</th>)}
            <th />
          </tr>
        </thead>
        <tbody>
          <tr>
            <th>1</th>
            <td><Check type="checkbox" aria-label="选择第1行" /></td>
            <Cut>哈尔滨市专项建设基金</Cut>
            <td>1</td>
            <td>下级报送</td>
            <td>无</td>
            <td>市级储备</td>
            <td><Project href="#"><Badge>编</Badge>哈尔滨龙吉洁污泥处置工程</Project></td>
            <td />
          </tr>
        </tbody>
      </Grid>
    </GridArea>
  );
}

function Site() {
  const nav = ["首页", "项目储备", "滚动计划", "项目调度", "项目稽察", "综合分析"];
  const stages = ["全部", "谋划阶段", "前期阶段", "拟开工阶段", "在建阶段", "竣工阶段"];
  return (
    <Viewport>
      <Banner>
        <BannerArt viewBox="0 0 1598 86" preserveAspectRatio="none">
          <defs>
            <linearGradient id="ridge" x1="0" y1="0" x2="0" y2="1"><stop offset="0" stopColor="#295a89" /><stop offset="1" stopColor="#2e6599" /></linearGradient>
            <linearGradient id="shade" x1="0" y1="0" x2="1" y2="0"><stop offset="0" stopColor="#234b75" /><stop offset="1" stopColor="#2a5f92" stopOpacity="0" /></linearGradient>
            <linearGradient id="far" x1="0" y1="0" x2="1" y2="0"><stop offset="0" stopColor="#295a89" /><stop offset="1" stopColor="#2e6599" /></linearGradient>
          </defs>
          <path d="M40 0l50 12 40-4 70 1 35 12 30 5 60 12 60 9 50 1 40-15 40-7 70 4 55 2 40 10 80 20 60 24H0V0z" fill="url(#ridge)" />
          <path d="M0 0h40l40 10 40 18 60 20 120 20 80 18H0z" fill="url(#shade)" />
          <path d="M810 86l50-14 35-18 35-10 45-1 60-8 25 4 90-9 60 20 80 36z" fill="url(#far)" />
        </BannerArt>
        <Brand><Emblem /><BrandName>国家重大建设项目库</BrandName></Brand>
        <Account>
          资源节约与环境保护处： 资源节约与环境保护处
          <AccountLink href="#"><Gear />个人设置</AccountLink>
          <AccountLink href="#"><Power />退出</AccountLink>
        </Account>
      </Banner>
      <MainNav>
        {nav.map((t, i) => <NavLink href="#" key={t} $first={i === 0} $active={i === 1}>{t}</NavLink>)}
      </MainNav>
      <Work>
        <SideMenu>
          <SideHead>
            <Line d="M0 2h3M0 8h3M0 14h3M5 2h16M5 8h16M5 14h16" w={20} h={16} box="0 0 21 16" color="#3f83c0" />
            <SideTitle>导航菜单</SideTitle>
            <PlainButton $w={14} $h={20} $color="#2a92e2" aria-label="收起"><Line d="M7 1L2 8l5 7M14 1L9 8l5 7" w={13} /></PlainButton>
          </SideHead>
          {["储备项目审核", "本级项目储备库", "PPP项目储备库"].map((t, i) => <SideItem href="#" key={t} $active={i === 1}>{t}</SideItem>)}
          <Scroller pad={[17, 19]} lead={7} thumb={72} />
        </SideMenu>
        <Content>
          <SubTabs>
            <SubTab>总览</SubTab>
            <SubTab $active>基本查询</SubTab>
            <SubTab $w={102}>自定义查询</SubTab>
          </SubTabs>
          <Panels>
            <TreePanel>
              <TreeMain>
                <TreeTitle>项目阶段</TreeTitle>
                <Tree>
                  {stages.map((t, i) => <TreeNode key={t} $active={i === 3} $odd={i % 2 === 0} $last={i === 5}>{t}</TreeNode>)}
                </Tree>
                <Scroller pad={[19, 19]} lead={7} thumb={85} />
              </TreeMain>
              <VScroll>
                <ScrollArrow aria-label="向上滚动"><Chevron dir="up" w={16} sw={4} /></ScrollArrow>
                <VThumb />
                <ScrollArrow aria-label="向下滚动"><Chevron w={16} sw={4} /></ScrollArrow>
              </VScroll>
            </TreePanel>
            <Main>
              <MainTitle>
                <TitleText>查询条件</TitleText>
                <PlainButton $w={14} $h={20} $color="#2a92e2" aria-label="折叠"><Line d="M1 8l7-6 7 6M1 15l7-6 7 6" w={13} /></PlainButton>
              </MainTitle>
              <Query onSubmit={(e) => e.preventDefault()}>
                {rows.map(([pad, ...fields], r) => (
                  <Row key={r} $pad={pad}>
                    {fields.map(([label, kind, lead, gap, value]) => (
                      <Field key={label} $lead={lead} $gap={gap}>
                        <FieldName>{label}</FieldName>
                        <Control kind={kind} value={value} />
                      </Field>
                    ))}
                    {r === rows.length - 1 && (
                      <QueryButtons>
                        <Button $w={85} type="submit">查询</Button>
                        <Button $w={85} type="reset">重置</Button>
                      </QueryButtons>
                    )}
                  </Row>
                ))}
              </Query>
              <Tools>
                <ToolLines>
                  {leftTools.map((line, i) => (
                    <ToolLine key={i}>{line.map(([t, w]) => <Button key={t} $w={w}>{t}</Button>)}</ToolLine>
                  ))}
                </ToolLines>
                <ToolRight>{rightTools.map(([t, w]) => <Button key={t} $w={w}>{t}</Button>)}</ToolRight>
              </Tools>
              <Results />
              <Scroller pad={[19, 14]} lead={8} thumb={330} indent={72} />
              <Pager>
                第1/1页  共 <Count>1</Count> 条记录
                <Total>合计总投资： 11389 万元</Total>
                <PageSize>
                  <PageSizeSelect aria-label="每页条数"><option>20</option></PageSizeSelect>
                  <PageSizeArrow><Chevron w={14} sw={3} /></PageSizeArrow>
                </PageSize>
                {["首 页", "上一页", "下一页", "尾 页"].map((t) => <PageLink key={t}>{t}</PageLink>)}
                <label htmlFor="page-number">第</label>
                <PageNumber id="page-number" type="text" defaultValue="1" />
                页
                <Go>GO</Go>
              </Pager>
            </Main>
          </Panels>
        </Content>
      </Work>
    </Viewport>
  );
}

function Desktop() {
  const folder = <Folder />;
  const tasks = [
    ["国家重大建...", <Pinwheel size={42} colors={["#c040f0", "#fa3418", "#fff000", "#34dc78", "#3c8cf4"]} />, false],
    ["360极速浏...", folder, true],
    ["360极速浏...", folder, true],
    ["项目库参考...", folder, false],
    ["技术开发-发...", <Word />, false],
    ["Microsoft E...", <Excel />, false],
    ["21 - 画图", <Paint />, false],
  ];
  return (
    <TaskBar>
      <Launcher $w={66} aria-label="开始"><Orb /></Launcher>
      <Launcher $w={76} aria-label="浏览器"><Petals /></Launcher>
      <Launcher $w={74} aria-label="截图工具"><Snip /></Launcher>
      {tasks.map(([t, icon, stacked], i) => (
        <TaskButton key={i} $active={i === 0} $stacked={stacked} $folder={icon === folder}>{icon}{t}</TaskButton>
      ))}
      <Tray>
        {trayIcons.map(([t, w, icon]) => <PlainButton key={t} $w={w} aria-label={t}>{icon}</PlainButton>)}
        <Clock>11:05<br />2017/1/19 星期四</Clock>
        <ShowDesktop aria-label="显示桌面" />
      </Tray>
    </TaskBar>
  );
}

export default function App() {
  return (
    <Screen>
      <Global />
      <Browser />
      <Site />
      <StatusBar>
        {statusIcons.map(([t, d]) => <PlainButton key={t} $w={36} $color="#666" aria-label={t}><Line d={d} w={13} sw={1.200} /></PlainButton>)}
      </StatusBar>
      <Desktop />
    </Screen>
  );
}
